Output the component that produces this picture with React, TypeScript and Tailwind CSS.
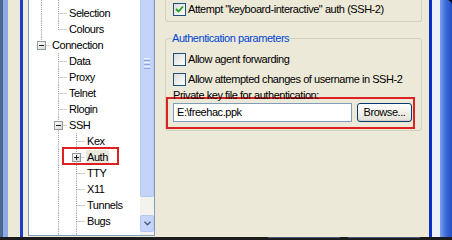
import React from "react";

type Row = {
  label: string;
  level: number;
  cont: boolean[];
  last?: boolean;
  box?: "-" | "+";
  sel?: boolean;
};

const rows: Row[] = [
  { label: "Selection", level: 1, cont: [true] },
  { label: "Colours", level: 1, cont: [true], last: true },
  { label: "Connection", level: 0, cont: [], last: true, box: "-" },
  { label: "Data", level: 1, cont: [false] },
  { label: "Proxy", level: 1, cont: [false] },
  { label: "Telnet", level: 1, cont: [false] },
  { label: "Rlogin", level: 1, cont: [false] },
  { label: "SSH", level: 1, cont: [false], box: "-" },
  { label: "Kex", level: 2, cont: [false, true] },
  { label: "Auth", level: 2, cont: [false, true], box: "+", sel: true },
  { label: "TTY", level: 2, cont: [false, true] },
  { label: "X11", level: 2, cont: [false, true] },
  { label: "Tunnels", level: 2, cont: [false, true] },
  { label: "Bugs", level: 2, cont: [false, true] },
];

const cellW = [17, 17, 18];

function Guide({ w, h, vTop, vBottom, horiz, box }: { w: number; h: number; vTop?: boolean; vBottom?: boolean; horiz?: boolean; box?: "-" | "+" }) {
  const cx = Math.floor(w / 2) + 0.5;
  const cy = Math.floor(h / 2) + 0.5;
  return (
    <span className="relative flex shrink-0 items-center justify-center" style={{ width: w, height: h }}>
      <svg width={w} height={h} className="absolute left-0 top-0">
        {vTop && <line x1={cx} y1={0} x2={cx} y2={cy} stroke="#a0a0a0" strokeDasharray="1 1" />}
        {vBottom && <line x1={cx} y1={cy} x2={cx} y2={h} stroke="#a0a0a0" strokeDasharray="1 1" />}
        {horiz && <line x1={cx} y1={cy} x2={w} y2={cy} stroke="#a0a0a0" strokeDasharray="1 1" />}
      </svg>
      {box && (
        <span className="relative flex h-[9px] w-[9px] items-center justify-center border border-[#8c9aa3] bg-gradient-to-br from-white to-[#d8d6cc]">
          <span className="absolute h-px w-[5px] bg-[#1f1f1f]" />
          {box === "+" && <span className="absolute h-[5px] w-px bg-[#1f1f1f]" />}
        </span>
      )}
    </span>
  );
}

function TreeRow({ row }: { row: Row }) {
  const cells = [];
  for (let k = 0; k < row.level; k++) {
    cells.push(<Guide key={k} w={cellW[k]} h={16} vTop={row.cont[k]} vBottom={row.cont[k]} />);
  }
  cells.push(
    <Guide key="own" w={cellW[row.level]} h={16} vTop vBottom={!row.last} horiz box={row.box} />
  );
  return (
    <div className="flex h-[16px] items-center pl-[4px]">
      {cells}
      <span className={["ml-[1px] whitespace-nowrap px-[1px] leading-[14px]", row.sel ? "bg-[#ebe8dc]" : ""].join(" ")}>
        {row.label}
      </span>
    </div>
  );
}

function Check({ checked }: { checked?: boolean }) {
  return (
    <span className="flex h-[13px] w-[13px] shrink-0 items-center justify-center border border-[#1c5180] bg-gradient-to-br from-[#dcdcd7] to-white">
      {checked && (
        <svg width="9" height="9" viewBox="0 0 9 9">
          <path d="M1 4 L3.5 6.5 L8 1.5" stroke="#21a121" strokeWidth="1.8" fill="none" />
        </svg>
      )}
    </span>
  );
}

function CheckRow({ label, checked }: { label: string; checked?: boolean }) {
  return (
    <div className="flex h-[20px] items-center pl-[7px]">
      <Check checked={checked} />
      <span className="ml-[2px] whitespace-nowrap">{label}</span>
    </div>
  );
}

export default function App() {
  return (
    <div className="flex h-[240px] w-[452px] flex-col overflow-hidden bg-[#ece9d8] font-['Liberation_Sans',Arial,sans-serif] text-[11px] tracking-[-0.45px] text-black">
      <div className="flex h-[237px]">
        {/* left window edge */}
        <div className="w-[3px] bg-[#4a6890]" />
        <div className="w-[5px] bg-[#8faae2]" />
        <div className="w-[12px] bg-[#ece9d8]" />
        <div className="w-[3px] bg-[#1b3fc6]" />
        <div className="w-[5px] bg-[#efece2]" />

        {/* tree panel */}
        <div className="flex h-[236px] w-[127px] border-x border-b border-[#7f9db9] bg-white">
          <div className="relative w-[111px] overflow-hidden">
            <div className="flex h-[5px] pl-[4px]">
              <Guide w={17} h={5} vTop vBottom />
              <Guide w={17} h={5} vTop vBottom />
            </div>
            {rows.map((r) => (
              <TreeRow key={r.label} row={r} />
            ))}
            <div className="flex h-[10px] pl-[4px]">
              <Guide w={17} h={10} />
              <Guide w={17} h={10} vTop vBottom />
              <Guide w={18} h={10} vTop vBottom />
            </div>
            <div className="pointer-events-none absolute left-[33px] top-[147px] h-[18px] w-[57px] border-2 border-[#dd2222]" />
          </div>
          {/* scrollbar */}
          <div className="flex w-[14px] flex-col bg-[#f4f2ec]">
            <div className="flex h-[197px] items-center justify-center rounded-b-[2px] border border-t-0 border-[#b5c8f3] bg-[#c4d4f9]">
              <div className="mb-[70px] flex w-[6px] flex-col gap-[1px]">
                <span className="h-px bg-[#eef3fe]" />
                <span className="h-px bg-[#8fa9e0]" />
                <span className="h-px bg-[#eef3fe]" />
                <span className="h-px bg-[#8fa9e0]" />
                <span className="h-px bg-[#eef3fe]" />
                <span className="h-px bg-[#8fa9e0]" />
              </div>
            </div>
            <div className="h-[18px]" />
            <div className="flex h-[17px] items-center justify-center rounded-[2px] border border-[#b5c8f3] bg-[#c6d5f9]">
              <svg width="7" height="5" viewBox="0 0 7 5">
                <path d="M0.5 0.8 L3.5 3.8 L6.5 0.8" stroke="#4d6185" strokeWidth="1.5" fill="none" />
              </svg>
            </div>
          </div>
        </div>

        <div className="w-[10px]" />

        {/* right column */}
        <div className="flex w-[257px] flex-col">
          <div className="flex h-[22px] items-start rounded-b-[3px] border-x border-b border-[#d0d0bf] pt-[-1px]">
            <div className="flex h-[19px] items-center pl-[7px]">
              <Check checked />
              <span className="ml-[2px] whitespace-nowrap">Attempt "keyboard-interactive" auth (SSH-2)</span>
            </div>
          </div>

          <fieldset className="mt-[10px] rounded-[3px] border border-[#d0d0bf] px-0 pb-[1px]">
            <legend className="ml-[6px] px-0 leading-[13px] text-[#0046d5]">Authentication parameters</legend>
            <div className="mt-[4px]">
              <CheckRow label="Allow agent forwarding" />
              <CheckRow label="Allow attempted changes of username in SSH-2" />
              <div className="h-[13px] pl-[7px] leading-[13px]">Private key file for authentication:</div>
              <div className="mt-[-5px] flex w-[249px] items-start border-2 border-[#dd2222] pb-[5px] pl-[5px] pr-[1px] pt-[4px]">
                <div className="flex h-[19px] w-[179px] items-center border border-[#7f9db9] bg-white pl-[3px]">
                  E:\freehac.ppk
                </div>
                <div className="ml-[5px] flex h-[19px] w-[55px] items-center justify-center rounded-[3px] border border-[#003c74] bg-gradient-to-b from-white to-[#e3e1d6] shadow-[inset_0_-1px_0_#d6d0c5]">
                  Browse...
                </div>
              </div>
            </div>
          </fieldset>
        </div>

        <div className="w-[7px]" />
        {/* right window edge */}
        <div className="w-[3px] bg-[#0b30c4]" />
        <div className="w-[8px] bg-[#edf1fa]" />
        <div className="w-[12px] bg-black">
          <div className="h-full rounded-tr-[5px] bg-gradient-to-r from-[#7aa0ea] via-[#3a68d8] to-[#2550c4]" />
        </div>
      </div>

      {/* bottom edge */}
      <div className="flex h-[3px] bg-[#1c1c1c]">
        <div className="ml-[268px] w-[72px] border-t border-[#4d5a7a]" />
        <div className="ml-[8px] w-[72px] border-t border-[#4d5a7a]" />
      </div>
    </div>
  );
}
